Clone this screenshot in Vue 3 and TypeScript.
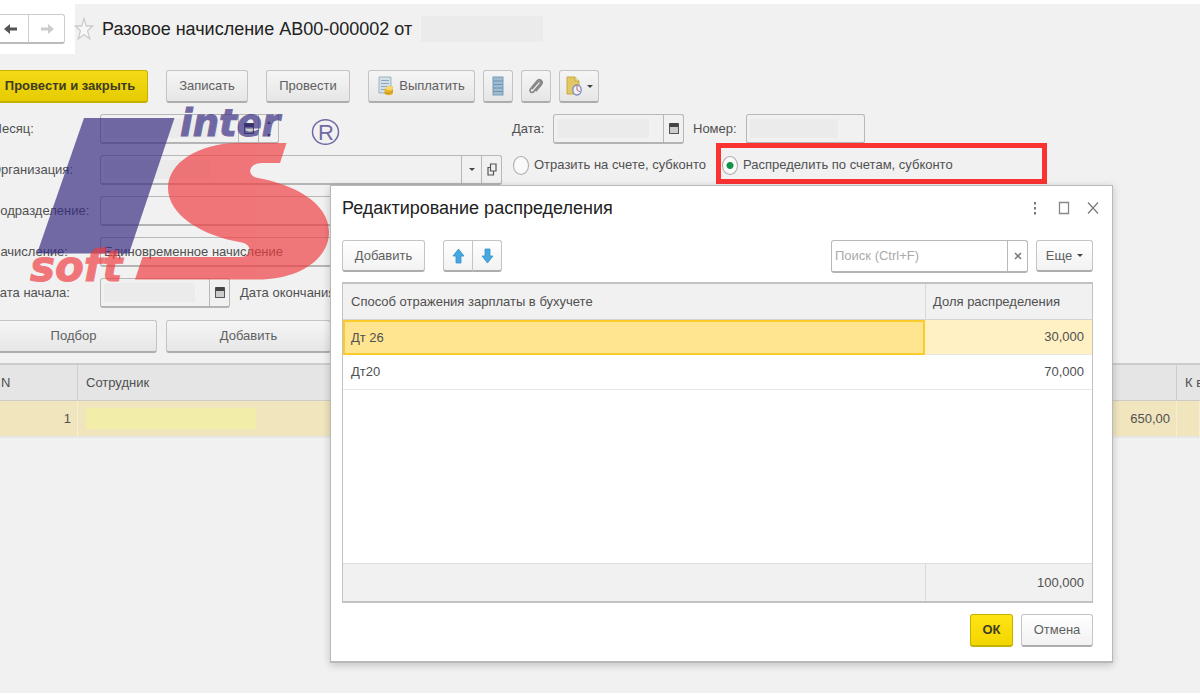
<script setup lang="ts">
import { ref } from 'vue'

interface Share {
  name: string
  value: string
}

const mode = ref<'account' | 'split'>('split')
const selected = ref(0)
const query = ref('')
const shares: Share[] = [
  { name: 'Дт 26', value: '30,000' },
  { name: 'Дт20', value: '70,000' },
]
const accrual = ref('Единовременное начисление')
</script>

<template>
  <div class="page">
    <header class="head">
      <div class="history">
        <button class="hist back" type="button" aria-label="Назад">
          <svg width="16" height="12" viewBox="0 0 16 12"><path d="M1 6 7 1v3.500h7v3H7V11z" fill="#555" /></svg>
        </button>
        <button class="hist fwd" type="button" aria-label="Вперед">
          <svg width="16" height="12" viewBox="0 0 16 12"><path d="M15 6 9 1v3.500H2v3h7V11z" fill="#ccc" /></svg>
        </button>
      </div>
      <svg class="star" width="20" height="24" viewBox="0 0 20 24">
        <path d="M10 1.500 12.200 9H18.500L13.600 13.800 15.800 22 10 17.500 4.200 22 6.400 13.800 1.500 9H7.800Z" fill="#f8f8f8" stroke="#ccc" stroke-width="1.300" />
      </svg>
      <h1>Разовое начисление АВ00-000002 от</h1>
      <span class="mask date-mask"></span>
    </header>

    <div class="toolbar">
      <button class="btn primary first" type="button">Провести и закрыть</button>
      <button class="btn save" type="button">Записать</button>
      <button class="btn post" type="button">Провести</button>
      <button class="btn pay" type="button">
        <svg width="16" height="20" viewBox="0 0 16 20">
          <path d="M1 1h12v16H1z" fill="#d3e0e8" stroke="#9db4c2" />
          <path d="M3 4.500h8M3 7.500h8M3 10.500h8M3 13.500h4" stroke="#8ca7b7" />
          <path d="M6.500 13v4c0 3 8.500 3 8.500 0v-6c-2-2-6-1-6 1z" fill="#e6b62d" />
          <ellipse cx="11.500" cy="12" rx="3.400" ry="2" fill="#f7d868" />
          <path d="M6.500 16c1 2 6 2 8.500-1" fill="none" stroke="#b98a1b" />
        </svg>
        Выплатить
      </button>
      <button class="btn icon" type="button" aria-label="Реестр">
        <svg width="12" height="20" viewBox="0 0 12 20">
          <rect x="1" y="1" width="10" height="18" fill="#9dbbd1" stroke="#7a9cb7" />
          <path d="M1 5h10M1 8.500h10M1 12h10M1 15.500h10" stroke="#6f93b0" />
        </svg>
      </button>
      <button class="btn icon" type="button" aria-label="Файлы">
        <svg width="16" height="20" viewBox="0 0 16 20">
          <path d="m4 13 6-7c1.500-1.700 3.500.2 2.200 1.900l-6.500 7.700c-2 2.300-4.900-.3-3-2.700L9 5c2.700-3 6.800.3 4.300 3.600l-5.500 6.600" fill="none" stroke="#888" stroke-width="1.700" />
        </svg>
      </button>
      <button class="btn menu" type="button" aria-label="Отчеты">
        <svg width="17" height="20" viewBox="0 0 17 20">
          <path d="M1 1h8l4 4v13H1z" fill="#e1c765" stroke="#c9aa45" />
          <path d="M9 1v4h4" fill="#f3e5a8" stroke="#c9aa45" />
          <ellipse cx="11" cy="14" rx="4.200" ry="5" fill="#eef1f8" stroke="#7a88b7" stroke-width="1.300" />
          <path d="M11 10v4l3 2" fill="none" stroke="#c06570" />
        </svg>
        <span class="caret"></span>
      </button>
    </div>

    <form class="form" @submit.prevent>
      <label class="lbl" for="month">Месяц:</label>
      <div class="field month">
        <input id="month" type="text" /><span class="mask in"></span>
        <button class="adorn" type="button" aria-label="Календарь"><i class="cal"></i></button>
        <button class="adorn" type="button" aria-label="Изменить месяц">
          <svg width="6" height="18" viewBox="0 0 6 18"><path d="m1 4 2-3 2 3zM1 14l2 3 2-3z" fill="#555" /></svg>
        </button>
      </div>
      <div class="side">
        <label class="date-label" for="date">Дата:</label>
        <div class="field date">
          <input id="date" type="text" /><span class="mask in"></span>
          <button class="adorn" type="button" aria-label="Календарь"><i class="cal"></i></button>
        </div>
        <label class="number-label" for="number">Номер:</label>
        <div class="field number"><input id="number" type="text" /><span class="mask in"></span></div>
      </div>

      <label class="lbl" for="org">Организация:</label>
      <div class="field">
        <input id="org" type="text" /><span class="mask in org-mask"></span>
        <button class="adorn" type="button" aria-label="Выбрать"><span class="caret"></span></button>
        <button class="adorn" type="button" aria-label="Открыть">
          <svg width="10" height="13" viewBox="0 0 10 13"><path d="M3.500 1h5.500v7H3.500zM3.500 4.500H1V12h5.500V8" fill="none" stroke="#555" stroke-width="1.200" /></svg>
        </button>
      </div>
      <div class="side radios">
        <label class="radio"><input v-model="mode" type="radio" name="mode" value="account" />Отразить на счете, субконто</label>
        <label class="radio marked"><input v-model="mode" type="radio" name="mode" value="split" />Распределить по счетам, субконто</label>
      </div>

      <label class="lbl" for="dept">Подразделение:</label>
      <div class="field"><input id="dept" type="text" /></div>
      <span></span>

      <label class="lbl" for="accrual">Начисление:</label>
      <div class="field"><input id="accrual" v-model="accrual" type="text" /></div>
      <span></span>

      <label class="lbl" for="start">Дата начала:</label>
      <div class="period">
        <div class="field start">
          <input id="start" type="text" /><span class="mask in"></span>
          <button class="adorn" type="button" aria-label="Календарь"><i class="cal"></i></button>
        </div>
        <label for="end">Дата окончания:</label>
        <div class="field end"><input id="end" type="text" /></div>
      </div>
      <span></span>
    </form>

    <div class="pick">
      <button class="btn" type="button">Подбор</button>
      <button class="btn" type="button">Добавить</button>
    </div>

    <table class="staff">
      <colgroup><col class="c-n" /><col /><col class="c-sum" /><col class="c-pay" /></colgroup>
      <thead><tr><th>N</th><th>Сотрудник</th><th></th><th>К выплате</th></tr></thead>
      <tbody><tr><td class="num">1</td><td><span class="name-mask"></span></td><td class="num">650,00</td><td></td></tr></tbody>
    </table>

    <svg class="logo" width="320" height="180" viewBox="25 110 320 180" role="img" aria-label="inter IS soft">
      <g class="violet">
        <path d="M84 118h90.500L129 253.500H37z" />
        <text class="word" x="180" y="136" font-size="37">inter</text>
        <ellipse cx="325.500" cy="132" rx="13" ry="12.300" fill="none" stroke="#352a81" stroke-width="1.500" />
        <text class="reg" x="318" y="140" font-size="22">R</text>
      </g>
      <g class="red">
        <path d="M286.500 143 280 163H262C248 163 246 176 258 178C292 184 329 202 329 232C329 260 298 279.500 258 279.500H135L142.500 257H240C252 257 253 245 242 242.500C202 236 168 215 168 188C168 162 200 143 238 143Z" />
        <text class="word" x="30" y="281" font-size="42">soft</text>
      </g>
    </svg>

    <section class="dialog" role="dialog" aria-labelledby="dialog-title">
      <div class="dialog-head">
        <h2 id="dialog-title">Редактирование распределения</h2>
        <button type="button" aria-label="Меню">
          <svg width="12" height="16" viewBox="0 0 12 16"><path d="M5 2h2v2.500H5zM5 7h2v2.500H5zM5 12h2v2.500H5z" fill="#777" /></svg>
        </button>
        <button type="button" aria-label="Развернуть">
          <svg width="12" height="16" viewBox="0 0 12 16"><path d="M1.500 2.500h9v11h-9z" fill="none" stroke="#888" stroke-width="1.300" /></svg>
        </button>
        <button type="button" aria-label="Закрыть">
          <svg width="12" height="16" viewBox="0 0 12 16"><path d="m1 2.500 10 11M11 2.500l-10 11" fill="none" stroke="#777" stroke-width="1.200" /></svg>
        </button>
      </div>

      <div class="dialog-bar">
        <button class="btn add" type="button">Добавить</button>
        <div class="order">
          <button class="btn" type="button" aria-label="Вверх">
            <svg width="13" height="16" viewBox="0 0 13 16"><path d="M6.500 1 12 8H9v7H4V8H1z" fill="#45a9e0" stroke="#3692ca" stroke-width=".8" /></svg>
          </button>
          <button class="btn" type="button" aria-label="Вниз">
            <svg width="13" height="16" viewBox="0 0 13 16"><path d="M6.500 15 12 8H9V1H4v7H1z" fill="#45a9e0" stroke="#3692ca" stroke-width=".8" /></svg>
          </button>
        </div>
        <div class="field search">
          <input v-model="query" type="text" placeholder="Поиск (Ctrl+F)" aria-label="Поиск" />
          <button class="adorn" type="button" aria-label="Очистить" @click="query = ''">
            <svg width="8" height="8" viewBox="0 0 8 8"><path d="m1 1 6 6M7 1 1 7" stroke="#777" stroke-width="1.500" /></svg>
          </button>
        </div>
        <button class="btn more" type="button">Еще <span class="caret"></span></button>
      </div>

      <table class="shares">
        <colgroup><col /><col class="c-share" /></colgroup>
        <thead><tr><th>Способ отражения зарплаты в бухучете</th><th>Доля распределения</th></tr></thead>
        <tbody>
          <tr v-for="(s, i) in shares" :key="s.name" :class="{ active: i === selected }" @click="selected = i">
            <td>{{ s.name }}</td><td class="num">{{ s.value }}</td>
          </tr>
          <tr class="blank"><td colspan="2"></td></tr>
        </tbody>
        <tfoot><tr><td></td><td class="num">100,000</td></tr></tfoot>
      </table>

      <div class="dialog-foot">
        <button class="btn primary ok" type="button">ОК</button>
        <button class="btn cancel" type="button">Отмена</button>
      </div>
    </section>
  </div>
</template>

<style>
body {
  background: #f1f1f1;
}
</style>

<style scoped>
.page,
.page *,
.page *::after {
  box-sizing: border-box;
}
.page {
  position: relative;
  min-height: 100vh;
  overflow: hidden;
  border-top: 4px solid #fff;
  border-bottom: 1px solid #fff;
  background: #f1f1f1;
  color: #505050;
  font: 13px/20px "Liberation Sans", Arial, sans-serif;
}
button,
input {
  font: inherit;
  color: inherit;
  margin: 0;
  padding: 0;
}
.head {
  display: flex;
  align-items: center;
  height: 50px;
}
.history {
  display: flex;
  align-items: center;
  width: 75px;
  height: 50px;
  background: #fff;
}
.hist {
  display: flex;
  align-items: center;
  justify-content: center;
  height: 30px;
  border: 1px solid #ccc;
  border-bottom: 2px solid #bbb;
  background: #fff;
}
.back {
  width: 29px;
  border-left: 0;
  padding-right: 6px;
}
.fwd {
  width: 36px;
  border-left: 0;
  border-radius: 0 3px 3px 0;
}
.star {
  margin: 0 8px 0 -1px;
}
h1,
h2 {
  margin: 0;
  font-size: 18px;
  line-height: 28px;
  font-weight: 400;
  color: #222;
  white-space: nowrap;
}
h2 {
  flex: 1;
}
.mask {
  background: #ebebeb;
}
.date-mask {
  width: 122px;
  height: 26px;
  margin-left: 9px;
}
.toolbar {
  display: flex;
  gap: 8px;
  margin-top: 16px;
}
.btn {
  display: inline-flex;
  align-items: center;
  justify-content: center;
  height: 33px;
  border: 1px solid #c4c4c4;
  border-bottom: 2px solid #adadad;
  border-radius: 3px;
  background: linear-gradient(#f5f5f5, #e6e6e6);
  color: #606060;
  white-space: nowrap;
}
.primary {
  border-color: #c6b000;
  background: linear-gradient(#f3da16, #e6cc00);
  color: #3f3b20;
  font-weight: 700;
}
.first {
  width: 148px;
  margin-right: 10px;
  padding-right: 7px;
  border-left: 0;
  border-radius: 0 3px 3px 0;
}
.save {
  width: 82px;
  margin-right: 10px;
}
.post {
  width: 84px;
  margin-right: 10px;
}
.pay {
  width: 107px;
  gap: 5px;
}
.icon {
  width: 30px;
}
.menu {
  width: 40px;
  gap: 4px;
}
.caret {
  display: inline-block;
  border: 3px solid transparent;
  border-top: 3px solid #444;
  border-bottom: 0;
}
.form {
  display: grid;
  grid-template-columns: 100px 402px 1fr;
  grid-auto-rows: 30px;
  gap: 11px 0;
  margin-top: 11px;
}
.form label {
  line-height: 30px;
  white-space: nowrap;
}
.lbl {
  margin-left: -9px;
}
.field {
  position: relative;
  display: flex;
  min-width: 0;
  height: 30px;
  border: 1px solid #b8b8b8;
  border-bottom: 2px solid #b4b4b4;
  border-radius: 3px;
}
.field input {
  flex: 1;
  width: 0;
  min-width: 0;
  padding: 0 3px;
  border: 0;
  outline: 0;
  background: transparent;
}
.adorn {
  display: flex;
  align-items: center;
  justify-content: center;
  width: 20px;
  border: 0;
  border-left: 1px solid #b8b8b8;
  background: transparent;
}
.in {
  position: absolute;
  top: 4px;
  bottom: 4px;
  left: 3px;
  right: 34px;
}
.number .in {
  right: 26px;
}
.month .in {
  right: 60px;
}
.field .org-mask {
  right: 290px;
}
.cal {
  width: 10px;
  height: 11px;
  border: 1px solid #555;
  border-top: 4px solid #444;
  border-radius: 1px;
  background: #ccc;
}
.month {
  width: 179px;
}
.side {
  display: flex;
  padding-left: 10px;
}
.date-label {
  width: 41px;
}
.date {
  width: 131px;
  margin-right: 9px;
}
.number-label {
  width: 53px;
}
.number {
  width: 119px;
}
.radios {
  gap: 16px;
  padding-left: 11px;
}
.form .radio {
  position: relative;
  display: flex;
  align-items: center;
  gap: 5px;
  height: 20px;
  line-height: 20px;
}
.radio input {
  flex: none;
  appearance: none;
  width: 16px;
  height: 19px;
  border: 1px solid #aaa;
  border-radius: 50%;
  background: #fafafa;
}
.radio input:checked {
  background: radial-gradient(circle, #109548 0 3px, #fafafa 4px);
}
.marked::after {
  content: "";
  position: absolute;
  top: -12px;
  left: -6px;
  width: 331px;
  height: 41px;
  border: 5px solid #fb3232;
}
.period {
  display: flex;
}
.start {
  width: 130px;
  margin-right: 10px;
}
.end {
  flex: 1;
}
.pick {
  display: flex;
  gap: 9px;
  margin-top: 12px;
}
.pick .btn {
  width: 165px;
}
.pick .btn:first-child {
  width: 157px;
  padding-right: 9px;
  border-left: 0;
  border-radius: 0 3px 3px 0;
}
table {
  width: 100%;
  table-layout: fixed;
  border-collapse: separate;
  border-spacing: 0;
}
th,
td {
  padding: 0 8px;
  overflow: hidden;
  font-weight: 400;
  text-align: left;
  white-space: nowrap;
}
.num {
  text-align: right;
}
.staff {
  margin-top: 10px;
}
.staff th {
  height: 38px;
  border-top: 2px solid #ccc;
  border-bottom: 1px solid #ccc;
  border-right: 1px solid #ccc;
  background: #e5e5e5;
}
.staff th:first-child {
  padding-left: 1px;
}
.staff th:last-child {
  padding-right: 0;
  border-right: 0;
}
.staff td {
  height: 37px;
  border-right: 1px solid #f5efd8;
  border-bottom: 2px solid #e6e6e6;
  background: #f1e5bd;
}
.staff td.num {
  padding-right: 6px;
}
.c-n {
  width: 78px;
}
.c-sum {
  width: 110px;
}
.c-pay {
  width: 23px;
}
.name-mask {
  display: block;
  width: 170px;
  height: 21px;
  background: #f2eda8;
}
.logo {
  position: absolute;
  top: 106px;
  left: 25px;
  overflow: visible;
  pointer-events: none;
}
.logo g {
  opacity: 0.68;
}
.violet {
  fill: #352a81;
}
.red {
  fill: #ef3c3f;
}
.word {
  font-family: "DejaVu Sans", sans-serif;
  font-weight: 700;
  font-style: italic;
  stroke-width: 1px;
}
.violet .word {
  stroke: #352a81;
}
.red .word {
  stroke: #ef3c3f;
}
.reg {
  font-family: "Liberation Sans", Arial, sans-serif;
}
.dialog {
  position: absolute;
  top: 181px;
  left: 330px;
  right: 87px;
  padding: 0 19px 14px 11px;
  border: 1px solid #b9b9b9;
  border-bottom: 2px solid #b9b9b9;
  background: #fff;
  box-shadow: 0 2px 8px #0003;
}
.dialog-head {
  display: flex;
  align-items: center;
  gap: 17px;
  height: 44px;
  margin-right: -6px;
}
.dialog-head button {
  display: flex;
  border: 0;
  background: none;
}
.dialog-bar {
  display: flex;
  margin-top: 10px;
}
.dialog .btn {
  height: 32px;
}
.dialog .btn:not(.primary) {
  background: linear-gradient(#fff, #f2f2f2);
}
.add {
  width: 83px;
}
.order {
  display: flex;
  margin-left: 18px;
}
.order .btn {
  width: 30px;
}
.order .btn:first-child {
  border-radius: 3px 0 0 3px;
}
.order .btn:last-child {
  margin-left: -1px;
  border-radius: 0 3px 3px 0;
}
.search {
  width: 197px;
  height: 33px;
  margin-left: auto;
}
.search input::placeholder {
  color: #aaa;
  opacity: 1;
}
.more {
  width: 57px;
  margin-left: 8px;
  gap: 5px;
}
.shares {
  margin-top: 9px;
  border: 1px solid #c2c2c2;
  border-top-width: 2px;
  border-bottom-width: 2px;
}
.c-share {
  width: 167px;
}
.shares th {
  height: 36px;
  background: #f1f1f1;
  border-bottom: 1px solid #d4d4d4;
}
.shares th + th,
.shares tfoot td + td {
  padding-left: 7px;
  border-left: 1px solid #d8d8d8;
}
.shares td {
  height: 35px;
  border-bottom: 1px solid #e8e8e8;
}
.shares .active td {
  background: #fff1c4;
}
.shares .active td:first-child {
  padding-left: 6px;
  background: #ffe58f;
  border: 2px solid #fbcb2c;
}
.shares .blank td {
  height: 173px;
  border-bottom: 0;
}
.shares tfoot td {
  height: 38px;
  background: #f1f1f1;
  border-top: 1px solid #ddd;
  border-bottom: 0;
}
.dialog-foot {
  display: flex;
  justify-content: flex-end;
  gap: 8px;
  margin-top: 11px;
}
.dialog-foot .btn {
  height: 33px;
}
.ok {
  width: 43px;
  background: linear-gradient(#ffe414, #f3d600);
}
.cancel {
  width: 72px;
}
</style>
